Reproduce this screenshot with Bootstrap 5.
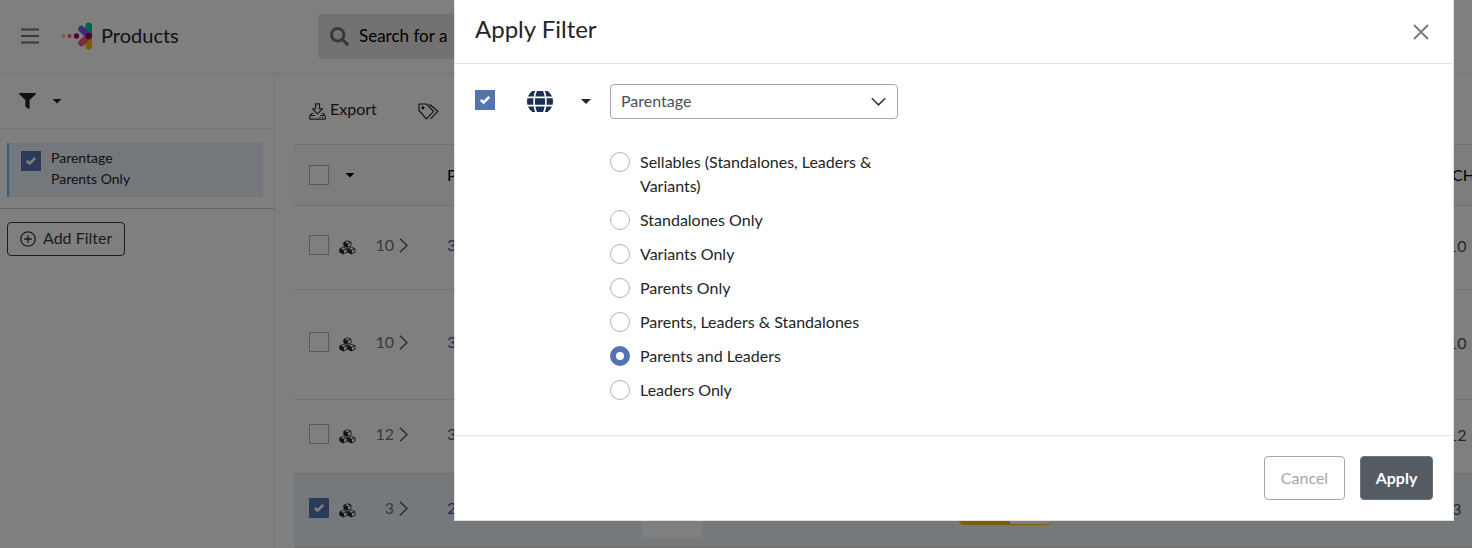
<!DOCTYPE html>
<html lang="en">
<head>
<meta charset="utf-8">
<meta name="viewport" content="width=device-width, initial-scale=1">
<title>Products</title>
<link href="https://cdn.jsdelivr.net/npm/bootstrap@5.3.0/dist/css/bootstrap.min.css" rel="stylesheet">
<style>
  body { font-family: Lato, "Liberation Sans", sans-serif; font-size: 16px; line-height: 24px; color: #212529; overflow: hidden; }
  svg { display: block; flex: none; }
  .line { border-color: #e8eaec !important; }
  .app-top { height: 74px; padding: 0 20px 1px; }
  .brand-area { width: 298px; }
  .page-title { font-size: 20px; font-weight: 400; padding-bottom: 2px; }
  .brand-logo { margin: 0 8px 0 17px; }
  .searchbox { width: 560px; height: 45px; padding: 0 12px; background: #e4e4e4; border-radius: 4px; }
  .searchbox input { border: 0; background: none; outline: 0; color: #000; font-size: 17px; width: 100%; }
  .searchbox input::placeholder { color: #000; opacity: 1; }
  .plain { border: 0; background: none; padding: 0; color: inherit; }
  .caret { width: 10px; height: 5px; background: currentColor; clip-path: polygon(0 0, 100% 0, 50% 100%); }
  .sidebar { width: 275px; min-height: 474px; }
  .side-tools { height: 55px; padding: 0 19px; }
  .filter-item { margin: 14px 11px 11px 7px; padding: 4px 12px; gap: 10px; height: 54px; border-left: 2px solid #7ab8f5; background: #e9f1fa; font-size: 14px; line-height: 21px; }
  .side-rule { border-top: 1px solid #c8cbce; }
  .add-filter { margin: 13px 7px; height: 34px; padding: 0 12px 2px; border: 1px solid #343a40; border-radius: 4px; background: none; color: #343a40; }
  .add-filter svg { margin: 2px 7px 0 0; }
  .tick { appearance: none; width: 20px; height: 20px; margin: 0; border: 1px solid #adb5bd; background: #fff center / 12px 12px no-repeat; flex: none; display: block; }
  .tick:checked { border-color: #5474b0; background-color: #5474b0; background-image: url("data:image/svg+xml,%3Csvg xmlns='http://www.w3.org/2000/svg' viewBox='0 0 12 12'%3E%3Cpath d='M1.8 6 4.600 8.500 10.300 2.800' fill='none' stroke='%23fff' stroke-width='2.600'/%3E%3C/svg%3E"); }
  .toolbar { height: 70px; padding: 0 15px; gap: 41px; }
  .grid-wrap { margin-left: 19px; }
  .grid { table-layout: fixed; width: 100%; border-collapse: collapse; }
  .grid th, .grid td { border-top: 1px solid #e0e2e4; padding: 0 15px; font-weight: 400; white-space: nowrap; }
  .grid td { padding-bottom: 5px; }
  .grid th, .grid th.count-col { background: #fbfbfb; color: #000; height: 61px; }
  .grid th.count-col { padding: 0 0 0 4px; }
  .grid td.count-col { padding: 0 6px 3px 0; text-align: center; color: #495057; }
  .h-a { height: 84px; } .h-b { height: 110px; } .h-c { height: 74px; }
  .grid .chosen td { background: #ecf3f9; border-bottom: 1px solid #e4dcdc; }
  .cubes { margin: 4px 0 0 10px; }
  .kids { width: 38px; text-align: right; color: #6c757d; margin-right: 5px; }
  .grid a { color: #3a5a9a; text-decoration: none; }
  .thumb { width: 60px; height: 60px; background: #fff; border-radius: 4px; }
  .meter { width: 95px; height: 34px; border: 1px solid #ffb800; border-radius: 6px; overflow: hidden; background: #fff; }
  .meter div { height: 100%; background: #ffb800; }
  .filter-dialog { max-width: 1000px; margin: 0 18px 0 auto; }
  .filter-dialog .modal-content { border: 1px solid #dee2e6; border-top: 0; border-radius: 0; }
  .filter-dialog .modal-header { height: 64px; padding: 0 20px; border-radius: 0; }
  .filter-dialog .modal-title { font-size: 24px; line-height: 30px; font-weight: 400; padding-bottom: 5px; }
  .filter-dialog .modal-body { padding: 20px 20px 33px; }
  .filter-dialog .modal-footer { padding: 20px; gap: 15px; }
  .filter-dialog .modal-footer .btn { margin: 0; height: 44px; border-radius: 4px; padding: 0; }
  .close-x { color: #777; }
  .use-tick { margin: 6px 17px 0 0; }
  .scope { width: 98px; height: 35px; gap: 28px; padding-left: 15px; }
  .attr { width: 288px; }
  .attr .form-select { height: 35px; padding: 0 34px 2px 10px; border: 1px solid #a5a8ab; border-radius: 4px; color: #495057; background-position: right 10px center; background-size: 17px 17px; background-image: url("data:image/svg+xml,%3Csvg xmlns='http://www.w3.org/2000/svg' viewBox='0 0 17 17'%3E%3Cpath d='M1.800 5.200 8.500 11.800 15.200 5.200' fill='none' stroke='%23343a40' stroke-width='1.600'/%3E%3C/svg%3E"); }
  .choices { margin-top: 31px; gap: 10px; }
  .choices label { gap: 10px; }
  .pick { appearance: none; width: 20px; height: 20px; margin: 2px 0 0; border: 1px solid #adb5bd; border-radius: 50%; background: #fff; flex: none; }
  .pick:checked { border: 6px solid #5474b0; }
  .btn-cancel { width: 81px; border: 1px solid #a0a7b5; color: #a0a7b0; background: #fff; }
  .btn-apply { width: 73px; border: 1px solid #6c757d; color: #fff; background: #545b62; font-weight: 700; }
</style>
</head>
<body>
<svg class="d-none" aria-hidden="true">
  <symbol id="cubes" viewBox="0 0 17 15">
    <g fill="#fff" stroke="#22282c" stroke-width=".9">
      <path d="M8.500 .8 12 2.200v3.600L8.500 7.300 5 5.800V2.200zM4.500 7.300 8 8.700v3.600L4.500 13.800 1 12.300V8.700zM12.500 7.300 16 8.700v3.600l-3.500 1.500L9 12.300V8.700z"/>
      <path fill="#22282c" d="M5 2.200 8.500 3.700v3.600L5 5.800zM1 8.700l3.500 1.500v3.600L1 12.300zM9 8.700l3.500 1.500v3.600L9 12.300z"/>
      <path fill="none" d="M8.500 3.700 12 2.200M4.500 10.200 8 8.700M12.500 10.200 16 8.700"/>
    </g>
  </symbol>
  <symbol id="next" viewBox="0 0 9 15"><path d="M1 .8 8 7.500 1 14.200" fill="none" stroke="#495057" stroke-width="1.300"/></symbol>
</svg>

<header class="app-top d-flex align-items-center border-bottom line">
  <div class="brand-area d-flex align-items-center">
    <button class="plain" aria-label="Menu"><svg width="20" height="16" viewBox="0 0 20 16"><path d="M1 1.500h18M1 8h18M1 14.500h18" stroke="#6c757d" stroke-width="2"/></svg></button>
    <svg class="brand-logo" width="36" height="28" viewBox="0 0 36 28" aria-hidden="true">
      <circle cx="6.500" cy="14" r="1.500" fill="#ffb800"/><circle cx="12.500" cy="14" r="2" fill="#f0557d"/><circle cx="19.500" cy="14" r="2.700" fill="#a0007d"/>
      <g stroke-width="6.600" stroke-linecap="round">
        <path d="M31.700 3.700V13" stroke="#00c896"/><path d="M31.700 15v9.300" stroke="#ffb800"/>
        <path d="m24.500 7 7.200 7" stroke="#7d5ae6"/><path d="m24.500 21 7.200-7" stroke="#f0557d"/>
      </g>
      <circle cx="31.700" cy="14" r="3.300" fill="#8c0078"/>
    </svg>
    <h1 class="page-title m-0">Products</h1>
  </div>
  <div class="searchbox d-flex align-items-center gap-2">
    <svg width="19" height="19" viewBox="0 0 512 512" fill="#6c757d"><path d="M505 442.700L405.300 343c-4.500-4.500-10.600-7-17-7H372c27.600-35.300 44-79.700 44-128C416 93.100 322.900 0 208 0S0 93.100 0 208s93.100 208 208 208c48.300 0 92.700-16.400 128-44v16.300c0 6.400 2.500 12.500 7 17l99.700 99.700c9.400 9.400 24.600 9.400 33.900 0l28.300-28.300c9.400-9.400 9.400-24.600.1-34zM208 336c-70.700 0-128-57.200-128-128 0-70.700 57.200-128 128-128 70.700 0 128 57.200 128 128 0 70.700-57.200 128-128 128z"/></svg>
    <input type="text" aria-label="Search" placeholder="Search for a">
  </div>
</header>

<div class="d-flex">
  <aside class="sidebar border-end line flex-shrink-0">
    <div class="side-tools d-flex align-items-center border-bottom line">
      <button class="plain d-flex align-items-center" aria-label="Filters">
        <svg width="17" height="16" viewBox="0 0 512 512" preserveAspectRatio="none"><path d="M487.976 0H24.028C2.710 0-8.047 25.866 7.058 40.971L192 225.941V432c0 7.831 3.821 15.170 10.237 19.662l80 55.980C298.020 518.690 320 507.493 320 487.980V225.941l184.947-184.970C520.021 25.896 509.338 0 487.976 0z" fill="#212529"/></svg>
        <span class="caret ms-3"></span>
      </button>
    </div>
    <div class="filter-item d-flex">
      <input class="tick mt-1" type="checkbox" id="f1" checked>
      <label for="f1">Parentage<br>Parents Only</label>
    </div>
    <div class="side-rule"></div>
    <button class="add-filter d-inline-flex align-items-center">
      <svg width="16" height="16" viewBox="0 0 16 16" fill="none" stroke="#343a40" stroke-width="1.300"><circle cx="8" cy="8" r="7.200"/><path d="M8 4.200v7.600M4.200 8h7.600"/></svg>Add Filter
    </button>
  </aside>

  <main class="flex-grow-1 overflow-hidden">
    <div class="grid-wrap">
      <div class="toolbar d-flex align-items-center">
        <button class="plain d-flex align-items-center">
          <svg class="me-1 mt-1" width="17" height="17" viewBox="0 0 17 17" fill="none" stroke="#343a40" stroke-width="1.200" stroke-linejoin="round"><path d="M6.500 .8h4v5h3l-5 5-5-5h3zM4.500 10.500H2.700L.8 12.800v3.400h15.400v-3.400l-1.900-2.300h-1.800M.8 12.500H6M11 12.500h5.200"/><path d="M10.500 14.400h1M13 14.400h1"/></svg>Export
        </button>
        <button class="plain mt-1" aria-label="Tags"><svg width="21" height="17" viewBox="0 0 21 17" fill="none" stroke="#212529" stroke-width="1.200" stroke-linejoin="round"><path d="M1 1h7.500l7 7.300-7 7.500L1 7.500zM11.500 1.200l8.300 7.100-7.300 7.500"/><circle cx="5" cy="4.800" r="1" fill="#212529"/></svg></button>
      </div>
      <table class="grid">
        <colgroup><col style="width:138px"><col style="width:195px"><col style="width:316px"><col><col style="width:24px"></colgroup>
        <thead><tr>
          <th><div class="d-flex align-items-center"><input class="tick" type="checkbox" aria-label="Select all"><button class="plain ms-3" aria-label="Selection menu"><span class="caret d-block"></span></button></div></th>
          <th>P</th><th></th><th></th><th class="count-col">CH</th>
        </tr></thead>
        <tbody>
          <tr class="h-a"><td><div class="d-flex align-items-center"><input class="tick" type="checkbox" aria-label="Select row"><svg class="cubes" width="17" height="15"><use href="#cubes"/></svg><span class="kids">10</span><svg width="9" height="15"><use href="#next"/></svg></div></td><td><a href="#">3</a></td><td></td><td></td><td class="count-col">10</td></tr>
          <tr class="h-b"><td><div class="d-flex align-items-center"><input class="tick" type="checkbox" aria-label="Select row"><svg class="cubes" width="17" height="15"><use href="#cubes"/></svg><span class="kids">10</span><svg width="9" height="15"><use href="#next"/></svg></div></td><td><a href="#">3</a></td><td></td><td></td><td class="count-col">10</td></tr>
          <tr class="h-c"><td><div class="d-flex align-items-center"><input class="tick" type="checkbox" aria-label="Select row"><svg class="cubes" width="17" height="15"><use href="#cubes"/></svg><span class="kids">12</span><svg width="9" height="15"><use href="#next"/></svg></div></td><td><a href="#">3</a></td><td></td><td></td><td class="count-col">12</td></tr>
          <tr class="h-c chosen"><td><div class="d-flex align-items-center"><input class="tick" type="checkbox" aria-label="Select row" checked><svg class="cubes" width="17" height="15"><use href="#cubes"/></svg><span class="kids">3</span><svg width="9" height="15"><use href="#next"/></svg></div></td><td><a href="#">2</a></td><td><div class="thumb"></div></td><td><div class="meter"><div style="width:55%"></div></div></td><td class="count-col">3</td></tr>
        </tbody>
      </table>
    </div>
  </main>
</div>

<div class="modal-backdrop show"></div>
<div class="modal d-block" role="dialog" aria-labelledby="dlg">
  <div class="modal-dialog filter-dialog">
    <div class="modal-content">
      <div class="modal-header">
        <h2 class="modal-title" id="dlg">Apply Filter</h2>
        <button class="plain close-x ms-auto me-1" aria-label="Close"><svg width="16" height="16" viewBox="0 0 16 16"><path d="m1 1 14 14M15 1 1 15" stroke="currentColor" stroke-width="1.800"/></svg></button>
      </div>
      <div class="modal-body d-flex">
        <input class="tick use-tick" type="checkbox" aria-label="Use filter" checked>
        <button class="plain scope d-flex align-items-center" aria-label="Scope">
          <svg width="26" height="21" viewBox="0 56 496 400" fill="#1b2f55"><path d="M336.500 160C322 70.700 287.800 8 248 8s-74 62.700-88.500 152h177zM152 256c0 22.200 1.200 43.500 3.300 64h185.300c2.100-20.500 3.300-41.800 3.300-64s-1.200-43.500-3.300-64H155.300c-2.100 20.500-3.300 41.800-3.300 64zm324.700-96c-28.600-67.900-86.500-120.400-158-141.600 24.400 33.800 41.200 84.700 50 141.600h108zM177.200 18.400C105.800 39.600 47.800 92.100 19.300 160h108c8.700-56.900 25.500-107.800 49.900-141.600zM487.400 192H372.700c2.100 21 3.300 42.500 3.300 64s-1.200 43-3.300 64h114.600c5.500-20.500 8.600-41.800 8.600-64s-3.100-43.500-8.500-64zM120 256c0-21.500 1.200-43 3.300-64H8.600C3.200 212.500 0 233.800 0 256s3.200 43.500 8.600 64h114.600c-2-21-3.200-42.500-3.200-64zm39.500 96c14.500 89.300 48.700 152 88.500 152s74-62.700 88.500-152h-177zm159.300 141.600c71.400-21.200 129.400-73.700 158-141.600h-108c-8.800 56.900-25.600 107.800-50 141.600zM19.300 352c28.600 67.900 86.500 120.400 158 141.600-24.400-33.800-41.200-84.700-50-141.600h-108z"/></svg>
          <span class="caret"></span>
        </button>
        <div class="attr">
          <select class="form-select" aria-label="Attribute"><option>Parentage</option></select>
          <div class="choices d-flex flex-column">
            <label class="d-flex"><input class="pick" type="radio" name="p"><span>Sellables (Standalones, Leaders &amp; Variants)</span></label>
            <label class="d-flex"><input class="pick" type="radio" name="p"><span>Standalones Only</span></label>
            <label class="d-flex"><input class="pick" type="radio" name="p"><span>Variants Only</span></label>
            <label class="d-flex"><input class="pick" type="radio" name="p"><span>Parents Only</span></label>
            <label class="d-flex"><input class="pick" type="radio" name="p"><span>Parents, Leaders &amp; Standalones</span></label>
            <label class="d-flex"><input class="pick" type="radio" name="p" checked><span>Parents and Leaders</span></label>
            <label class="d-flex"><input class="pick" type="radio" name="p"><span>Leaders Only</span></label>
          </div>
        </div>
      </div>
      <div class="modal-footer">
        <button class="btn btn-cancel">Cancel</button>
        <button class="btn btn-apply">Apply</button>
      </div>
    </div>
  </div>
</div>
<script src="https://cdn.jsdelivr.net/npm/bootstrap@5.3.0/dist/js/bootstrap.bundle.min.js"></script>
</body>
</html>
